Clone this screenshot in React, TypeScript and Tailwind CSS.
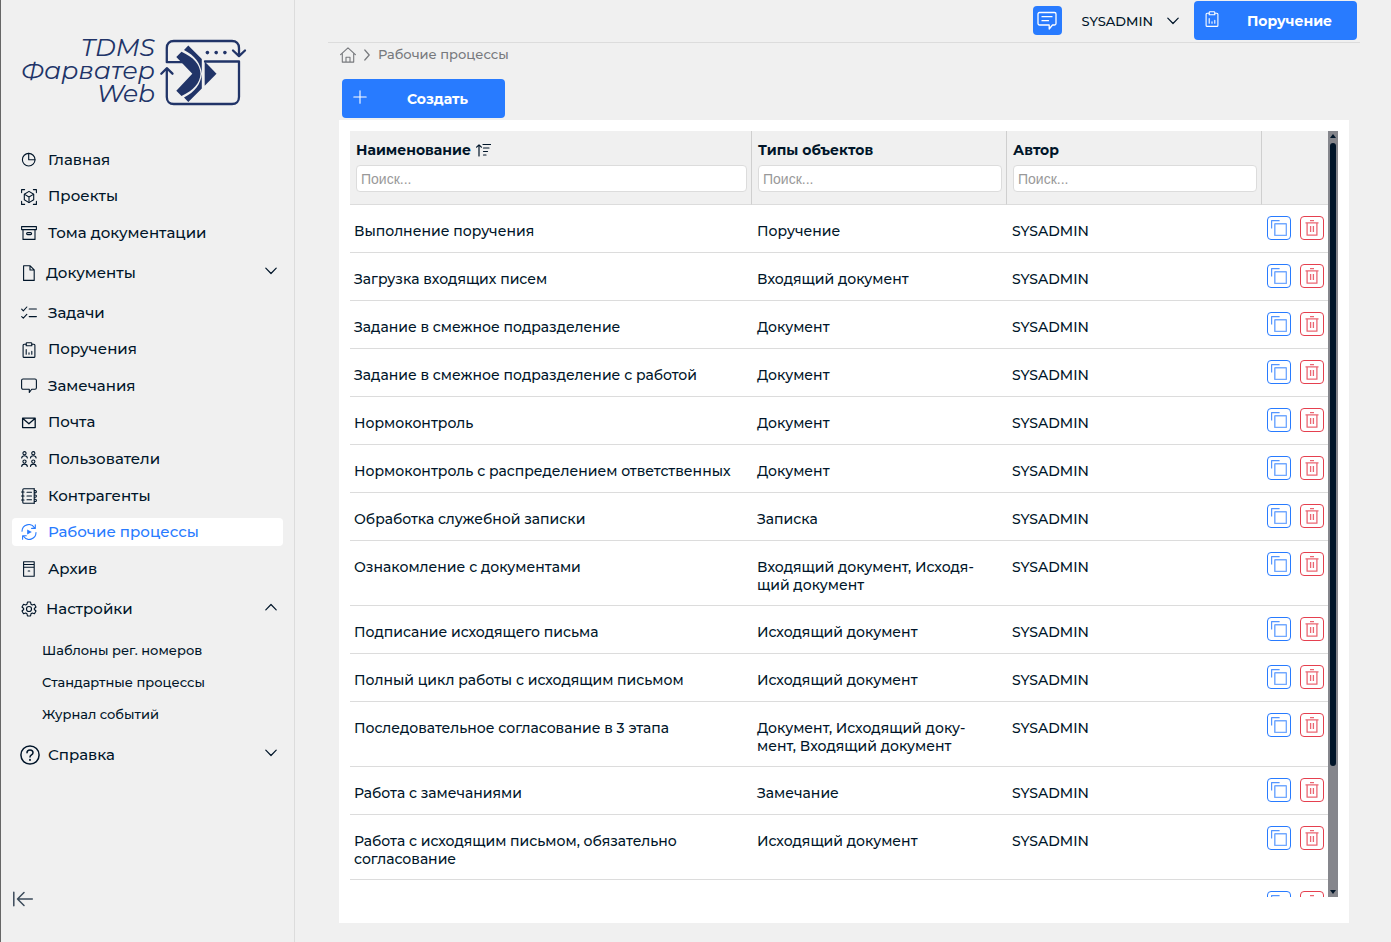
import React from "react";

type IconProps = { className?: string };

function Svg({ children, className = "size-4", box = "0 0 16 16", width = 1.1 }: { children: React.ReactNode; className?: string; box?: string; width?: number }) {
  return (
    <svg aria-hidden="true" viewBox={box} className={"shrink-0 " + className} fill="none" stroke="currentColor" strokeWidth={width} strokeLinecap="round" strokeLinejoin="round">
      {children}
    </svg>
  );
}

const PieIcon = () => (
  <Svg>
    <circle cx="7.7" cy="7.7" r="6.3" />
    <path d="M7.7 1.4v6.3H14" />
  </Svg>
);
const CubeIcon = () => (
  <Svg>
    <path d="M.6 3.6v-3h3M12.4.6h3v3M15.4 12.4v3h-3M3.6 15.4h-3v-3" />
    <path d="M8 2.4l4.7 2.8v5.6L8 13.6l-4.7-2.8V5.2z" />
    <path d="M3.6 5.4L8 8l4.4-2.6M8 8v5.4" />
  </Svg>
);
const BoxIcon = () => (
  <Svg>
    <path d="M.6 1.600h14.800v3H.6zM2 4.600h12v9.800H2z" />
    <rect x="5.600" y="7.600" width="5" height="2" rx="1" />
  </Svg>
);
const FileIcon = () => (
  <Svg>
    <path d="M2.600.8h6.600l4 4v10.600H2.600zM9 .8V5h4.200" />
  </Svg>
);
const TasksIcon = () => (
  <Svg>
    <path d="M.7 4.200l1.600 1.600L5.800 2M.7 11.600l1.600 1.600 3.500-3.800M8.200 4h7.200M8.200 11.600h7.200" />
  </Svg>
);
const ClipboardIcon = ({ className }: IconProps) => (
  <Svg className={className}>
    <path d="M5 2.200H3.100c-.6 0-1 .4-1 1v11.200c0 .6.4 1 1 1h9.800c.6 0 1-.4 1-1V3.200c0-.6-.4-1-1-1H11" />
    <path d="M5.200 1.600c0-.5.3-.9.8-.9h4c.5 0 .8.4.8.9v2.100H5.200z" />
    <path d="M5.200 7.600v4.600M8 10.700v1.500M10.800 9.400v2.800" />
  </Svg>
);
const CommentIcon = () => (
  <Svg>
    <path d="M2 1h12c.8 0 1.400.6 1.400 1.400v7.400c0 .8-.6 1.400-1.400 1.400h-3.300l-2.400 3.300v-3.300H2c-.8 0-1.400-.6-1.400-1.400V2.400C.6 1.600 1.200 1 2 1z" />
  </Svg>
);
const MailIcon = () => (
  <Svg width={1.3}>
    <path d="M1.600 3.200h12.600v9.400H1.600zM1.900 3.500L7.900 8.800l6-5.300" />
  </Svg>
);
const Person = ({ x, y }: { x: number; y: number }) => (
  <>
    <circle cx={x} cy={y} r="1.600" />
    <path d={`M${x - 2.8} ${y + 4.8}c.2-3 5.400-3 5.600 0`} />
  </>
);
const UsersIcon = () => (
  <Svg>
    <Person x={3.5} y={2.2} />
    <Person x={12.3} y={2.2} />
    <Person x={3.5} y={10.6} />
    <Person x={12.3} y={10.6} />
  </Svg>
);
const ContactsIcon = () => (
  <Svg>
    <path d="M13.200.8H2.800c-.6 0-1 .4-1 1v12.400c0 .6.4 1 1 1h10.400M.5 4h2.600M.5 8h2.600M.5 12h2.600M6 4.200h4.500M6 8h4.500M6 11.800h4.500" />
    <path d="M13.200.8v14.400M13.400 2.600h1c.7 0 1 .4 1 1s-.3 1.300-1 1.300h-1M13.400 7h1c.7 0 1 .4 1 1s-.3 1.200-1 1.200h-1M13.400 11.200h1c.7 0 1 .4 1 1s-.3 1.300-1 1.300h-1" />
  </Svg>
);
const ProcessIcon = () => (
  <Svg>
    <path d="M1 7.200A6.800 6.800 0 0 1 13.500 3.700M15 8.600A6.800 6.800 0 0 1 2.500 12.300M14.300.9v3.500h-3.700M1.600 15.200v-3.500h3.700" />
    <path d="M6.200 5.400v5.200L10.800 8z" fill="currentColor" stroke="none" />
  </Svg>
);
const ArchiveIcon = () => (
  <Svg>
    <path d="M2.600.8h10.600v14.400H2.600zM2.600 3.500h10.600M2.600 6.300h10.600M7.200 10h1.500" />
  </Svg>
);
const GearIcon = () => (
  <Svg box="0 0 24 24" width={1.7}>
    <path d="M9.700 1.500h4.600l.7 3.300 2 1.200 3.200-1 2.300 4-2.500 2.200v1.600l2.500 2.200-2.300 4-3.200-1-2 1.200-.7 3.300H9.700L9 19.200 7 18l-3.200 1-2.300-4L4 12.800v-1.600L1.500 9l2.300-4L7 6l2-1.200z" />
    <circle cx="12" cy="12" r="3.800" />
  </Svg>
);
const HelpIcon = () => (
  <Svg box="0 0 20 20" className="size-5" width={1.5}>
    <circle cx="10" cy="10" r="9.100" />
    <path d="M7 7.700c0-3.700 6-3.700 6 0 0 2.100-3 2.100-3 4.300" />
    <path d="M10 14.800v.2" strokeWidth="1.900" />
  </Svg>
);
const Chevron = ({ className = "" }: IconProps) => (
  <Svg box="0 0 12 8" className={"h-2 w-3 " + className} width={1.2}>
    <path d="M.8 1.200L6 6.500l5.200-5.300" />
  </Svg>
);

function Logo() {
  return (
    <a href="#" className="flex items-start pt-9 pl-5 text-[#213468]">
      <span className="flex w-[134px] flex-col items-end text-[25px] leading-[23px] font-normal italic">
        <span>TDMS</span>
        <span>Фарватер</span>
        <span>Web</span>
      </span>
      <svg aria-hidden="true" viewBox="158 36 90 72" className="ml-[3px] h-[72px] w-[90px] shrink-0" fill="none" stroke="currentColor" strokeWidth="2.300" strokeLinecap="round" strokeLinejoin="round">
        <path d="M185 62.200h-18.200V48c0-4.300 2.700-7 7-7H232c4.300 0 7 2.700 7 7v7.500M233 50.500l6 5.600 6-5.600" />
        <path d="M205 61.500h34v35.500c0 4.300-2.700 7-7 7h-58.200c-4.300 0-7-2.700-7-7V69M161.300 73.700l5.500-5.500 5.700 5.500" />
        <g fill="currentColor" stroke="none">
          <circle cx="207.400" cy="52.600" r="1.800" />
          <circle cx="216.200" cy="52.600" r="1.800" />
          <circle cx="224.900" cy="52.600" r="1.800" />
          <path d="M188.300 45.500L201.800 59v14.500c-1-10-7-18-17.800-23.500z" />
          <path d="M188.300 102L201.800 88.500V74c-1 10-7 18-17.800 23.500z" />
          <path d="M181.500 51.800c12 5.500 18.500 12.500 19 22-.5 9.500-7 16.500-19 22.200l-5.200-5.300 16-16.900-16-16.800z" />
          <path d="M204.700 61.500l11.800 12.200-11.800 12z" />
        </g>
      </svg>
    </a>
  );
}

function NavItem({ icon, label, active = false }: { icon: React.ReactNode; label: string; active?: boolean }) {
  return (
    <li>
      <a href="#" aria-current={active ? "page" : undefined} className={"flex h-7 items-center gap-[11px] rounded pl-[9px] " + (active ? "bg-white text-[#287bff]" : "")}>
        {icon}
        <span>{label}</span>
      </a>
    </li>
  );
}

function NavGroup({ icon, label, open = false, spacing = "gap-[9px] pl-[9px]" }: { icon: React.ReactNode; label: string; open?: boolean; spacing?: string }) {
  return (
    <button type="button" aria-expanded={open} className={"flex h-7 w-full items-center pr-1.5 text-left " + spacing}>
      {icon}
      <span className="flex-1">{label}</span>
      <Chevron className={open ? "mb-1 rotate-180" : "mb-1"} />
    </button>
  );
}

function Sidebar() {
  return (
    <aside className="flex w-[295px] shrink-0 flex-col border-r border-l border-r-[#dcdcdc] border-l-[#666666]">
      <Logo />
      <nav className="mt-[38px] flex flex-col pr-[11px] pl-[11px] text-[15px]">
        <ul className="flex h-[101px] flex-col justify-between">
          <NavItem icon={<PieIcon />} label="Главная" />
          <NavItem icon={<CubeIcon />} label="Проекты" />
          <NavItem icon={<BoxIcon />} label="Тома документации" />
        </ul>
        <div className="py-3">
          <NavGroup icon={<FileIcon />} label="Документы" />
        </div>
        <ul className="flex h-[284px] flex-col justify-between">
          <NavItem icon={<TasksIcon />} label="Задачи" />
          <NavItem icon={<ClipboardIcon />} label="Поручения" />
          <NavItem icon={<CommentIcon />} label="Замечания" />
          <NavItem icon={<MailIcon />} label="Почта" />
          <NavItem icon={<UsersIcon />} label="Пользователи" />
          <NavItem icon={<ContactsIcon />} label="Контрагенты" />
          <NavItem icon={<ProcessIcon />} label="Рабочие процессы" active />
          <NavItem icon={<ArchiveIcon />} label="Архив" />
        </ul>
        <div className="pt-3">
          <NavGroup icon={<GearIcon />} label="Настройки" open />
        </div>
        <ul className="mt-3 flex flex-col pl-[30px] text-[13px]">
          <li className="flex h-8 items-center"><a href="#">Шаблоны рег. номеров</a></li>
          <li className="flex h-8 items-center"><a href="#">Стандартные процессы</a></li>
          <li className="flex h-8 items-center"><a href="#">Журнал событий</a></li>
        </ul>
        <div className="mt-2.5">
          <NavGroup icon={<HelpIcon />} label="Справка" spacing="gap-2 pl-2" />
        </div>
      </nav>
      <button type="button" aria-label="Свернуть меню" className="mt-auto mb-[33px] ml-[11px] w-6 text-[#3b4a5a]">
        <Svg box="0 0 22 20" className="h-5 w-[22px]" width={1.5}>
          <path d="M1.800 3.300v13.400M20.300 10H5.500M12 3.500L5.500 10l6.500 6.500" />
        </Svg>
      </button>
    </aside>
  );
}

function PrimaryButton({ icon, label }: { icon: React.ReactNode; label: string }) {
  return (
    <button type="button" className="flex h-[39px] w-[163px] items-start rounded bg-[#287bff] pt-2.5 pl-2.5 text-white">
      {icon}
      <span className="flex-1 pl-0.5 text-center text-[14px] leading-5 font-bold">{label}</span>
    </button>
  );
}

function TopBar() {
  return (
    <header className="mr-[31px] ml-[33px] flex h-[43px] items-start justify-end border-b border-[#dcdcdc] pt-px pr-[3px]">
      <button type="button" aria-label="Сообщения" className="mt-[5px] flex size-[29px] items-center justify-center rounded bg-[#287bff] text-white">
        <Svg box="0 0 20 20" className="size-5" width={1.3}>
          <path d="M2.500 1.500h15c.8 0 1.500.7 1.500 1.500v9.500c0 .8-.7 1.500-1.500 1.500h-2l-3.300 4v-4H2.500c-.8 0-1.500-.7-1.500-1.500V3c0-.8.7-1.500 1.500-1.500zM5 5.700h10M5 9.700h6.500" />
        </Svg>
      </button>
      <button type="button" className="mt-2.5 flex items-center gap-3.5 pr-[15px] pl-5 text-[13px] leading-5">
        SYSADMIN
        <Chevron />
      </button>
      <PrimaryButton icon={<ClipboardIcon />} label="Поручение" />
    </header>
  );
}

function Breadcrumbs() {
  return (
    <nav aria-label="Навигация" className="mt-0.5 ml-[45px] flex h-5 items-center gap-2 text-[13px] text-[#77797d]">
      <a href="#" aria-label="Главная">
        <Svg>
          <path d="M.6 7.700L8 .9l7.400 6.800M2.300 6.500v8.600h11.400V6.500M6 15v-4.800h4V15" />
        </Svg>
      </a>
      <Svg box="0 0 6 12" className="h-3 w-1.5" width={1.2}>
        <path d="M.8 1l4.400 5-4.400 5" />
      </Svg>
      <span>Рабочие процессы</span>
    </nav>
  );
}

const rows: [string, string][] = [
  ["Выполнение поручения", "Поручение"],
  ["Загрузка входящих писем", "Входящий документ"],
  ["Задание в смежное подразделение", "Документ"],
  ["Задание в смежное подразделение с работой", "Документ"],
  ["Нормоконтроль", "Документ"],
  ["Нормоконтроль с распределением ответственных", "Документ"],
  ["Обработка служебной записки", "Записка"],
  ["Ознакомление с документами", "Входящий документ, Исходя\u00adщий документ"],
  ["Подписание исходящего письма", "Исходящий документ"],
  ["Полный цикл работы с исходящим письмом", "Исходящий документ"],
  ["Последовательное согласование в 3 этапа", "Документ, Исходящий доку\u00adмент, Входящий документ"],
  ["Работа с замечаниями", "Замечание"],
  ["Работа с исходящим письмом, обязательно согласование", "Исходящий документ"],
  ["", ""],
];

function SearchInput({ label }: { label: string }) {
  return (
    <input
      type="text"
      aria-label={label}
      placeholder="Поиск..."
      className="mt-1.5 block h-[27px] w-full rounded border border-[#dcdcdc] bg-white px-1 font-['Liberation_Sans',Arial,sans-serif] text-[14px] font-normal placeholder:text-[#999999]"
    />
  );
}

function RowActions() {
  return (
    <div className="flex gap-[9px]">
      <button type="button" aria-label="Копировать" className="flex size-6 items-center justify-center rounded border border-[#287bff] text-[#287bff]">
        <Svg width={1.2}>
          <path d="M.6 8.500V.6h8" strokeLinecap="butt" opacity=".8" />
          <rect x="3.800" y="3.800" width="11.600" height="11.600" rx=".5" strokeWidth="1.500" opacity=".65" />
        </Svg>
      </button>
      <button type="button" aria-label="Удалить" className="flex size-6 items-center justify-center rounded border border-[#e5404f] text-[#e5404f]">
        <Svg width={1.3}>
          <path d="M1.500 2.900h13M6 .7h4M3.100 3v12.200h9.800V3M6.600 6v6M9.400 6v6" strokeLinecap="butt" opacity=".8" />
        </Svg>
      </button>
    </div>
  );
}

function ProcessTable() {
  const head = "h-[74px] border-r border-b border-r-[#cfcfcf] border-b-[#dcdcdc] pr-1 pl-1.5 pt-2.5 text-left align-top font-bold";
  return (
    <div className="flex min-h-0 flex-1">
      <div className="min-w-0 flex-1 overflow-y-auto [scrollbar-width:none]">
        <table className="w-full table-fixed border-separate border-spacing-0 text-[14px] leading-[18px]">
          <colgroup>
            <col />
            <col className="w-[255px]" />
            <col className="w-[255px]" />
            <col className="w-[66px]" />
          </colgroup>
          <thead className="sticky top-0 z-10 bg-[#f0f0f0]">
            <tr>
              <th className={head}>
                <span className="flex items-center gap-1">
                  Наименование
                  <Svg className="size-4" width={1.2}>
                    <path d="M4 14V3M1.600 5.200L4 2.800l2.400 2.400M8 2.500h7.500M8.500 6h5.500M8.500 9.500h4M8.500 13h2.500" />
                  </Svg>
                </span>
                <SearchInput label="Наименование" />
              </th>
              <th className={head}>
                Типы объектов
                <SearchInput label="Типы объектов" />
              </th>
              <th className={head}>
                Автор
                <SearchInput label="Автор" />
              </th>
              <td className="border-b border-[#dcdcdc]" />
            </tr>
          </thead>
          <tbody>
            {rows.map(([name, types], i) => (
              <tr key={i} className="h-12 align-top">
                <td className="border-b border-[#dcdcdc] pt-[17px] pr-2 pb-[11px] pl-1">{name}</td>
                <td className="border-b border-[#dcdcdc] pt-[17px] pr-5 pb-[11px] pl-[5px]">{types}</td>
                <td className="border-b border-[#dcdcdc] pt-[17px] pr-2 pb-[11px] pl-[5px]">{name && "SYSADMIN"}</td>
                <td className="border-b border-[#dcdcdc] pt-[11px] pl-[5px]">
                  <RowActions />
                </td>
              </tr>
            ))}
          </tbody>
        </table>
      </div>
      <div aria-hidden="true" className="flex w-2.5 shrink-0 flex-col items-center bg-[#85868c] py-[3px] text-[#001529]">
        <svg viewBox="0 0 6 4" className="h-1 w-1.5" fill="currentColor"><path d="M3 0l3 4H0z" /></svg>
        <div className="my-[5px] flex w-1.5 flex-1 flex-col">
          <div className="h-[84%] rounded-full bg-[#001529]" />
        </div>
        <svg viewBox="0 0 6 4" className="h-1 w-1.5" fill="currentColor"><path d="M0 0h6L3 4z" /></svg>
      </div>
    </div>
  );
}

export default function App() {
  return (
    <div lang="ru" className="flex h-screen min-h-[860px] bg-[#f0f0f0] font-['Montserrat','Inter',sans-serif] font-medium text-[#001529]">
      <Sidebar />
      <div className="flex min-w-0 flex-1 flex-col">
        <TopBar />
        <Breadcrumbs />
        <main className="mt-3.5 mr-[42px] mb-[19px] ml-11 flex min-h-0 flex-1 flex-col">
          <div className="mb-0.5 ml-[3px]">
            <PrimaryButton
              icon={
                <Svg>
                  <path d="M8 1.800v12.400M1.800 8h12.400" />
                </Svg>
              }
              label="Создать"
            />
          </div>
          <section className="flex min-h-0 flex-1 flex-col bg-white pt-[11px] pr-[11px] pb-[26px] pl-[11px]">
            <ProcessTable />
          </section>
        </main>
      </div>
    </div>
  );
}
